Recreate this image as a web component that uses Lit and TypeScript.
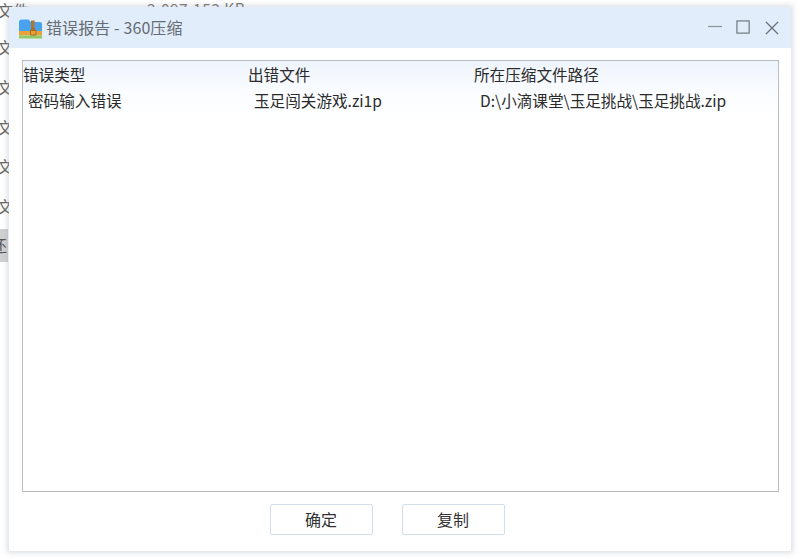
import { LitElement, html, css } from "lit";
import { customElement } from "lit/decorators.js";

@customElement("app-root")
export class AppRoot extends LitElement {
  static styles = css`
    :host {
      display: block;
      position: relative;
      width: 800px;
      height: 559px;
      overflow: hidden;
      background: #fff;
      font-family: "Noto Sans CJK SC", "Noto Sans", sans-serif;
      color: #333;
    }
    .behind {
      position: absolute;
      inset: 0;
      color: #666;
      font-size: 16px;
      line-height: 20px;
    }
    .behind span { position: absolute; white-space: nowrap; }
    .wen { left: -3px; }
    .size { left: 147px; top: -2px; color: #777; font-size: 15.5px; letter-spacing: 0.5px; }
    .old-btn {
      position: absolute;
      left: 0;
      top: 229px;
      width: 8px;
      height: 33px;
      background: #d0d0d0;
      overflow: hidden;
    }
    .old-btn i { position: absolute; left: -9px; top: 6px; font-style: normal; font-size: 16px; color: #555; }
    .window {
      position: absolute;
      left: 9px;
      top: 7px;
      width: 782px;
      height: 544px;
      background: #fff;
      box-shadow: 0 0 5px 2px rgba(150, 160, 175, 0.32);
      display: flex;
      flex-direction: column;
    }
    .title {
      height: 41px;
      flex: none;
      background: #e1edfa;
      display: flex;
      align-items: center;
      padding-left: 10px;
      padding-right: 11px;
      box-sizing: border-box;
    }
    .logo { width: 23px; height: 20px; flex: none; margin-right: 4px; margin-top: 2px; }
    .title-text { font-size: 16px; color: #666c73; flex: 1; letter-spacing: 0.1px; line-height: 20px; padding-bottom: 2px; }
    .ctrls { display: flex; align-items: center; gap: 13px; }
    .ctrls svg { display: block; width: 16px; height: 16px; }
    .ctrls svg.max { width: 15px; height: 15px; }
    .body {
      flex: 1;
      display: flex;
      flex-direction: column;
      padding: 12px 12px 0 13px;
      min-height: 0;
    }
    .list {
      height: 432px;
      flex: none;
      box-sizing: border-box;
      border: 1px solid #b9bcc0;
      background: linear-gradient(#eef4fc 0, #fbfdff 34px, #fff 60px);
      font-size: 15.6px;
      line-height: 20px;
      color: #2b2b2b;
    }
    .row { display: grid; }
    .head { height: 27px; padding-top: 3px; box-sizing: border-box; grid-template-columns: 225px 226px 1fr; }
    .head div { white-space: nowrap; }
    .data { padding-left: 5px; padding-top: 2px; grid-template-columns: 226px 226px 1fr; }
    .data div { white-space: nowrap; }
    .foot {
      flex: 1;
      display: flex;
      justify-content: center;
      align-items: flex-start;
      gap: 29px;
      padding-top: 12px;
      padding-right: 27px;
    }
    button {
      width: 103px;
      height: 31px;
      box-sizing: border-box;
      background: #fff;
      border: 1px solid #d3deeb;
      border-radius: 2px;
      font: inherit;
      font-size: 16px;
      line-height: 20px;
      color: #333;
      padding: 0 0 2px;
    }
  `;

  render() {
    return html`
      <div class="behind">
        <span class="wen" style="top:0px">文件</span>
        <span class="wen" style="top:37px">文</span>
        <span class="wen" style="top:77px">文</span>
        <span class="wen" style="top:117px">文</span>
        <span class="wen" style="top:156px">文</span>
        <span class="wen" style="top:196px">文</span>
        <span class="size">2,097,153 KB</span>
        <div class="old-btn"><i>还</i></div>
      </div>
      <div class="window">
        <div class="title">
          <svg class="logo" viewBox="0 0 23 20">
            <path d="M0 3Q0 0.5 2.5 0.5H9.5L12 3H21q2 0 2 2v9H0z" fill="#4aa3ee" />
            <rect x="12" y="1.5" width="3.6" height="12" fill="#a87a3a" />
            <rect x="0" y="12" width="23" height="4.5" fill="#e8a23a" />
            <rect x="0" y="16.5" width="23" height="3" fill="#8fcb62" />
            <path d="M11.5 11.5h5.5v4.5h-5.5zM13 11.5v-2h2.5v2" fill="none" stroke="#a9691c" stroke-width="1" />
          </svg>
          <div class="title-text">错误报告 - 360压缩</div>
          <div class="ctrls">
            <svg viewBox="0 0 16 16"><path d="M1 6.5H15" stroke="#8d939b" stroke-width="1.2" fill="none" /></svg>
            <svg class="max" viewBox="0 0 16 16"><rect x="1" y="1" width="13" height="13" stroke="#68707a" stroke-width="1.2" fill="none" /></svg>
            <svg viewBox="0 0 16 16"><path d="M2 2L14 14M14 2L2 14" stroke="#68707a" stroke-width="1.3" fill="none" /></svg>
          </div>
        </div>
        <div class="body">
          <div class="list">
            <div class="row head">
              <div>错误类型</div>
              <div>出错文件</div>
              <div>所在压缩文件路径</div>
            </div>
            <div class="row data">
              <div>密码输入错误</div>
              <div>玉足闯关游戏.zi1p</div>
              <div>D:\\小滴课堂\\玉足挑战\\玉足挑战.zip</div>
            </div>
          </div>
          <div class="foot">
            <button>确定</button>
            <button>复制</button>
          </div>
        </div>
      </div>
    `;
  }
}
